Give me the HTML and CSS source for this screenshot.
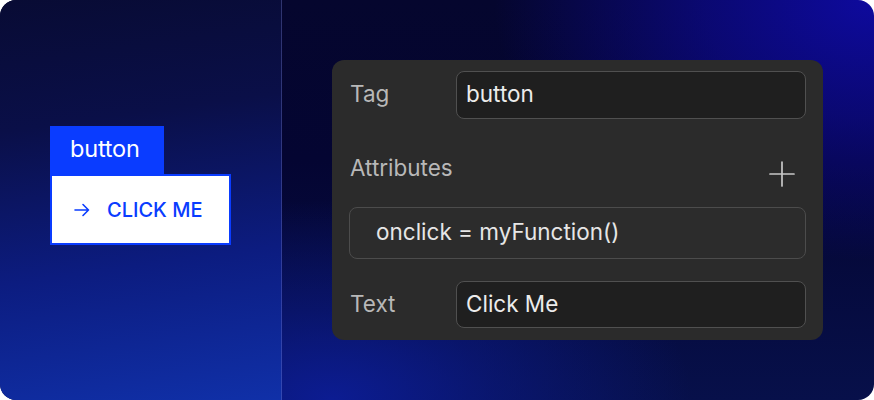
FILE: index.html
```html
<!DOCTYPE html>
<html>
<head>
<meta charset="utf-8">
<link rel="stylesheet" href="styles.css">
</head>
<body>
<div class="frame">
  <section class="left">
    <div class="preview">
      <div class="badge">button</div>
      <div class="btn">
        <svg class="arrow" width="16" height="14" viewBox="0 0 16 14" fill="none" stroke="currentColor" stroke-width="1.6" stroke-linecap="round" stroke-linejoin="round"><path d="M1 7h13.5M9 1.5 14.5 7 9 12.5"/></svg>
        <span>CLICK ME</span>
      </div>
    </div>
  </section>
  <section class="right">
    <div class="card">
      <div class="row">
        <span class="label">Tag</span>
        <div class="field">button</div>
      </div>
      <div class="attr-head">
        <span class="label">Attributes</span>
        <svg class="plus" width="26" height="26" viewBox="0 0 26 26" stroke="#c8c8c8" stroke-width="1.7" stroke-linecap="round"><path d="M13 1v24M1 13h24"/></svg>
      </div>
      <div class="attr">onclick = myFunction()</div>
      <div class="row">
        <span class="label">Text</span>
        <div class="field">Click Me</div>
      </div>
    </div>
  </section>
</div>
</body>
</html>
```
FILE: styles.css
```css
html, body { margin: 0; padding: 0; background: #ffffff; }
body { width: 874px; height: 400px; overflow: hidden; font-family: Inter, "Liberation Sans", sans-serif; }
.frame {
  width: 874px; height: 400px; border-radius: 16px; overflow: hidden;
  display: flex;
  background:
    radial-gradient(ellipse 380px 260px at 100% 0%, #0e0a9e 0%, rgba(14,10,158,0.6) 45%, rgba(14,10,158,0) 100%),
    radial-gradient(ellipse 360px 200px at 38% 100%, #0c1c92 0%, rgba(12,28,146,0.5) 45%, rgba(12,28,146,0) 100%),
    linear-gradient(180deg, #05062e 0%, #040532 40%, #07104a 100%);
}
.left {
  width: 281px; flex: none;
  border-right: 1px solid rgba(120,130,220,0.35);
  background: linear-gradient(172deg, #080b34 0%, #0a0f48 30%, #0c1c80 65%, #1030a8 100%);
  display: flex; align-items: center;
}
.preview { margin: 126px 0 0 50px; align-self: flex-start; }
.badge {
  width: 114px; height: 48px; box-sizing: border-box;
  background: #0a3cff; color: #ffffff;
  font-size: 23.5px; line-height: 46px; padding-left: 20px;
  letter-spacing: -0.2px;
}
.btn {
  width: 181px; height: 71px; box-sizing: border-box;
  background: #ffffff; border: 2px solid #0a3cff;
  color: #0a3cff; display: flex; align-items: center; gap: 17px;
  padding-left: 22px;
  font-size: 20px; font-weight: 500; letter-spacing: 0;
}
.arrow { flex: none; }
.right { flex: 1; padding: 60px 0 0 50px; }
.card {
  width: 491px; height: 280px; box-sizing: border-box;
  background: #2b2b2b; border-radius: 12px;
  padding: 11px 17px 0 18px;
  display: flex; flex-direction: column;
}
.row { display: flex; align-items: center; }
.label { color: #b8b8b8; font-size: 22.5px; width: 106px; flex: none; letter-spacing: 0; line-height: 26px; margin-top: -2px; }
.field {
  flex: 1; height: 48px; box-sizing: border-box;
  background: #1f1f1f; border: 1px solid #505050; border-radius: 8px;
  color: #ececec; font-size: 22.5px; line-height: 44px; padding-left: 9px;
}
.attr-head { display: flex; justify-content: space-between; align-items: center; margin-top: 36px; height: 30px; }
.attr-head .label { margin-top: -4px; }
.plus { margin-right: 11px; margin-top: 8px; }
.attr {
  margin-top: 22px; margin-left: -1px;
  height: 52px; box-sizing: border-box;
  border: 1px solid #4c4c4c; border-radius: 8px; background: #2c2c2c;
  color: #e6e6e6; font-size: 22.5px; line-height: 48px; padding-left: 26px;
}
.attr + .row { margin-top: 22px; }
.attr + .row .field { height: 47px; line-height: 44px; }
```
